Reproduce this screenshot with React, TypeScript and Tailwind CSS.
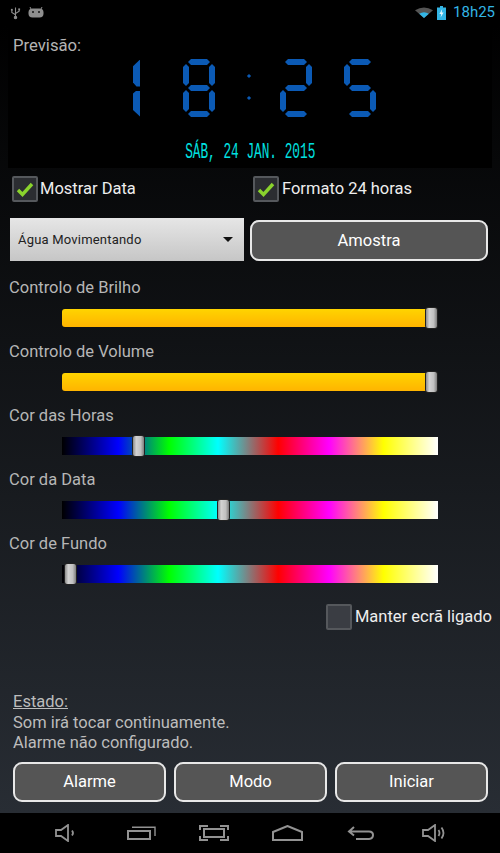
const HUES =
  "bg-[linear-gradient(to_right,#000_0%,#0000ff_15%,#00ff00_28.5%,#00ffff_41.5%,#ff0000_57.5%,#ff00ff_71%,#ffff00_85.5%,#ffffff_100%)]";

const H_SEG = "col-start-2 -mx-[1px] bg-[#0b5ab5] [clip-path:polygon(3px_0,calc(100%-3px)_0,100%_50%,calc(100%-3px)_100%,3px_100%,0_50%)]";
const V_SEG = "-my-[1px] bg-[#0b5ab5] [clip-path:polygon(50%_0,100%_3px,100%_calc(100%-3px),50%_100%,0_calc(100%-3px),0_3px)]";

// a, b, c, d, e, f, g
const DIGITS: Record<string, boolean[]> = {
  "2": [true, true, false, true, true, false, true],
  "5": [true, false, true, true, false, true, true],
  "8": [true, true, true, true, true, true, true],
};

const Segments = ({ value, className }: { value: string; className: string }) => {
  const [a, b, c, d, e, f, g] = DIGITS[value];
  return (
    <div className={`grid grid-cols-[6px_20px_6px] grid-rows-[6px_20px_6px_20px_6px] ${className}`}>
      {a && <div className={`${H_SEG} row-start-1`} />}
      {f && <div className={`${V_SEG} col-start-1 row-start-2`} />}
      {b && <div className={`${V_SEG} col-start-3 row-start-2`} />}
      {g && <div className={`${H_SEG} row-start-3`} />}
      {e && <div className={`${V_SEG} col-start-1 row-start-4`} />}
      {c && <div className={`${V_SEG} col-start-3 row-start-4`} />}
      {d && <div className={`${H_SEG} row-start-5`} />}
    </div>
  );
};

const Clock = () => (
  <div className="flex items-center h-[58px] mt-[3px]" aria-label="18:25">
    <div className="flex flex-col gap-[4px] ml-[125px] w-[7px]">
      <div className="h-[27px] bg-[#0b5ab5] [clip-path:polygon(100%_0,100%_100%,50%_100%,0_85%,0_25%)]" />
      <div className="h-[26px] bg-[#0b5ab5] [clip-path:polygon(50%_0,100%_0,100%_100%,0_75%,0_12%)]" />
    </div>
    <Segments value="8" className="ml-[43px]" />
    <div className="flex flex-col gap-[18px] ml-[32px] w-[4px] mt-[-3px]">
      <div className="w-[4px] h-[4px] bg-[#0b5ab5] rotate-45 scale-75" />
      <div className="w-[4px] h-[4px] bg-[#0b5ab5] rotate-45 scale-75" />
    </div>
    <Segments value="2" className="ml-[29px]" />
    <Segments value="5" className="ml-[32px]" />
  </div>
);

const Check = ({ checked, className = "" }: { checked?: boolean; className?: string }) => (
  <div className={`w-[26px] h-[26px] shrink-0 rounded-[2px] border-2 border-[#55585c] bg-[#2b2d31] flex items-center justify-center ${className}`}>
    {checked && (
      <svg width="18" height="16" viewBox="0 0 18 16">
        <path d="M2 9l4.5 4.5L16 3" fill="none" stroke="#8ad32d" strokeWidth="3.4" />
      </svg>
    )}
  </div>
);

const Button = ({ label, className = "" }: { label: string; className?: string }) => (
  <button className={`rounded-[9px] border-[2.5px] border-[#e8e8e8] bg-[#555555] pt-[2px] text-[16.5px] text-white ${className}`}>
    {label}
  </button>
);

const Slider = ({ label, track, thumb }: { label: string; track: string; thumb: string }) => (
  <div className="h-[64px]">
    <div className="pl-[9px] h-[24px] leading-[26px] text-[16.5px] text-[#b6b6b6]">{label}</div>
    <div className={`relative ml-[62px] mt-[10px] w-[376px] h-[18px] ${track}`}>
      <div className={`absolute -top-[2px] h-[22px] w-[13px] rounded-[3px] border border-[#222] bg-[linear-gradient(to_right,#8c8c8c,#d2d2d2_30%,#c0c0c0_70%,#7d7d7d)] ${thumb}`} />
    </div>
  </div>
);

const Volume = ({ wave, className }: { wave: string; className: string }) => (
  <svg viewBox="0 0 24 18" className={`h-[18px] w-[24px] ${className}`} fill="none" stroke="#929292" strokeWidth="1.8">
    <path d="M1 6h5l7-5v16l-7-5H1z" />
    <path d={wave} />
  </svg>
);

export default function App() {
  return (
    <div className="w-[500px] h-[853px] flex flex-col bg-black font-['Roboto',sans-serif] overflow-hidden">
      {/* status bar */}
      <div className="h-[25px] shrink-0 bg-black flex items-center">
        <svg viewBox="0 0 12 14" className="ml-[10px] w-[11px] h-[14px]" fill="none" stroke="#8e8e8e" strokeWidth="1.2">
          <path d="M6 1v11M6 9L2 6.5V4M6 7.5l4-2.5V3.5" />
          <circle cx="6" cy="12" r="1.3" fill="#8e8e8e" />
          <rect x="1" y="2.5" width="2" height="2" fill="#8e8e8e" stroke="none" />
          <rect x="9" y="2" width="2" height="2" fill="#8e8e8e" stroke="none" />
        </svg>
        <svg viewBox="0 0 16 11" className="ml-[7px] w-[16px] h-[11px]">
          <path d="M3 2L2 0M13 2l1-2" stroke="#8e8e8e" strokeWidth="1" />
          <rect x="0.5" y="1.5" width="15" height="9" rx="4" fill="#8e8e8e" />
          <rect x="4" y="4" width="2" height="2" fill="#333" />
          <rect x="10" y="4" width="2" height="2" fill="#333" />
        </svg>
        <svg viewBox="0 0 18 11" className="ml-auto w-[18px] h-[11px]">
          <path d="M0 3.2Q9-2.2 18 3.2L9 11z" fill="#555" />
          <path d="M4.2 6.8Q9 3.8 13.8 6.8L9 11z" fill="#33b5e5" />
        </svg>
        <svg viewBox="0 0 9 14" className="ml-[4px] w-[9px] h-[14px]">
          <path d="M3 0h3v1.5h3V14H0V1.5h3z" fill="#33b5e5" />
          <path d="M5.2 3L2.4 8h1.8l-.6 3.6L6.6 6.4H4.7z" fill="#e6f7fd" />
        </svg>
        <span className="ml-[7px] mr-[5px] text-[15px] leading-none text-[#33b5e5]">18h25</span>
      </div>

      <div className="flex-1 flex flex-col bg-[linear-gradient(to_bottom,#000,#282d34)]">
        {/* preview */}
        <div className="mx-[8px] h-[143px] shrink-0 bg-black pt-[11px]">
          <div className="pl-[5px] h-[20px] leading-[20px] text-[16.7px] text-[#b4b4b4]">Previsão:</div>
          <Clock />
          <div className="flex justify-center mt-[25px]">
            <span className="font-['Liberation_Mono',monospace] text-[22px] leading-[22px] text-[#00e0e0] scale-x-[0.58] whitespace-nowrap">
              SÁB, 24 JAN. 2015
            </span>
          </div>
        </div>

        {/* options */}
        <div className="flex items-center h-[26px] mt-[8px] text-[16.5px] text-[#eeeeee]">
          <Check checked className="ml-[12px]" />
          <span className="ml-[2px] w-[213px]">Mostrar Data</span>
          <Check checked />
          <span className="ml-[3px]">Formato 24 horas</span>
        </div>

        <div className="flex items-end h-[43px] mt-[16px]">
          <div className="ml-[10px] w-[234px] h-[43px] flex items-center justify-between pl-[8px] pr-[11px] bg-[linear-gradient(to_bottom,#e6e6e6,#c6c6c6)] text-[13px] tracking-[0.2px] text-[#222]">
            Água Movimentando
            <div className="w-0 h-0 border-x-[5px] border-x-transparent border-t-[5px] border-t-[#111]" />
          </div>
          <Button label="Amostra" className="ml-[6px] w-[238px] h-[41px]" />
        </div>

        {/* sliders */}
        <div className="mt-[14px]">
          <Slider
            label="Controlo de Brilho"
            track="rounded-[3px] bg-[linear-gradient(to_bottom,#ffd400,#ffb400)]"
            thumb="left-[363px]"
          />
          <Slider
            label="Controlo de Volume"
            track="rounded-[3px] bg-[linear-gradient(to_bottom,#ffd400,#ffb400)]"
            thumb="left-[363px]"
          />
          <Slider label="Cor das Horas" track={HUES} thumb="left-[70px]" />
          <Slider label="Cor da Data" track={HUES} thumb="left-[155px]" />
          <Slider label="Cor de Fundo" track={HUES} thumb="left-[2px]" />
        </div>

        <div className="flex items-center justify-end h-[26px] mt-[9px] pr-[8px] text-[16.5px] text-[#eeeeee]">
          <Check className="border-[#6a6d72] bg-[#3a3d43]" />
          <span className="ml-[3px]">Manter ecrã ligado</span>
        </div>

        {/* state */}
        <div className="mt-[62px] pl-[13px] text-[16.5px] leading-[20.5px] text-[#bcbcbc]">
          <div className="underline">Estado:</div>
          <div>Som irá tocar continuamente.</div>
          <div>Alarme não configurado.</div>
        </div>

        <div className="flex gap-[8px] pl-[13px] mt-[8px]">
          <Button label="Alarme" className="w-[153px] h-[40px]" />
          <Button label="Modo" className="w-[153px] h-[40px]" />
          <Button label="Iniciar" className="w-[153px] h-[40px]" />
        </div>
      </div>

      {/* nav bar */}
      <div className="h-[40px] shrink-0 bg-black flex items-center">
        <Volume wave="M17 6.5Q19 9 17 11.5" className="ml-[55px]" />
        <svg viewBox="0 0 29 14" className="ml-[48px] w-[29px] h-[14px]" fill="none" stroke="#929292" strokeWidth="2">
          <rect x="1" y="5" width="22" height="8" />
          <path d="M5 1.2h23V10" strokeWidth="1.4" />
        </svg>
        <svg viewBox="0 0 30 16" className="ml-[43px] w-[30px] h-[16px]" fill="none" stroke="#929292" strokeWidth="2">
          <rect x="5" y="4" width="20" height="8" />
          <path d="M1 5V1h8M21 1h8v4M1 11v4h8M21 15h8v-4" />
        </svg>
        <svg viewBox="0 0 31 16" className="ml-[43px] w-[31px] h-[16px]" fill="none" stroke="#929292" strokeWidth="2">
          <path d="M1 15V7L15.5 1 30 7v8z" />
        </svg>
        <svg viewBox="0 0 27 14" className="ml-[44px] w-[27px] h-[14px]" fill="none" stroke="#929292" strokeWidth="2">
          <path d="M7 1L2 5.5l5 4M2 5.5h20q4 0 4 3.5t-4 4H9" />
        </svg>
        <Volume wave="M16.5 6Q18.5 9 16.5 12M19.5 3.5Q23.5 9 19.5 14.5" className="ml-[48px]" />
      </div>
    </div>
  );
}
